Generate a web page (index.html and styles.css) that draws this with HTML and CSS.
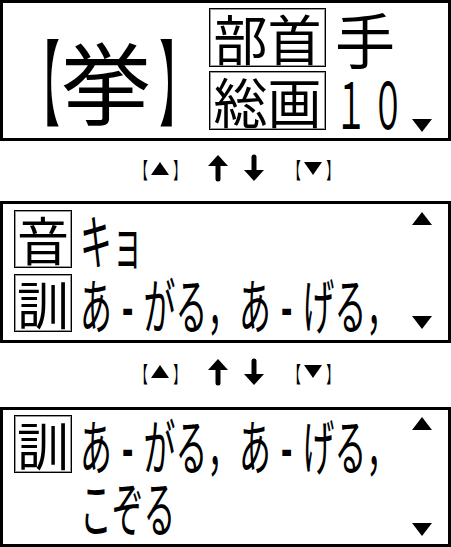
FILE: index.html
```html
<!DOCTYPE html>
<html lang="ja">
<head>
    <meta charset="UTF-8">
    <title>漢字辞典</title>
    <link rel="stylesheet" href="styles.css">
</head>
<body>
    <div class="screen">
        <section class="panel panel-head">
            <div class="headword">
                <span class="br"><span class="br-glyph">【</span></span>
                <span class="kanji">挙</span>
                <span class="br br-close"><span class="br-glyph">】</span></span>
            </div>
            <div class="info">
                <div class="tag tag-wide">部首</div>
                <div class="value">手</div>
                <div class="tag tag-wide">総画</div>
                <div class="value"><span class="narrow digits">１０</span></div>
            </div>
            <div class="scroll scroll-end">
                <svg class="tri" viewBox="0 0 20 13"><polygon points="0,0 20,0 10,13"/></svg>
            </div>
        </section>

        <div class="nav">
            <span class="key"><span class="kbr"><span>【</span></span><svg class="key-tri" viewBox="0 0 18 13"><polygon points="0,13 18,13 9,0"/></svg><span class="kbr"><span>】</span></span></span>
            <svg class="arrow up" viewBox="0 0 20 28"><path d="M10 25 V9"/><polygon points="0,12 10,1 20,12 15,12 5,12"/></svg>
            <svg class="arrow down" viewBox="0 0 20 28"><path d="M10 3 V19"/><polygon points="0,16 10,27 20,16 15,16 5,16"/></svg>
            <span class="key key-r"><span class="kbr"><span>【</span></span><svg class="key-tri" viewBox="0 0 18 13"><polygon points="0,0 18,0 9,13"/></svg><span class="kbr"><span>】</span></span></span>
        </div>

        <section class="panel panel-body">
            <div class="rows">
                <div class="row">
                    <div class="tag">音</div>
                    <div class="reading"><span class="narrow">キョ</span></div>
                </div>
                <div class="row">
                    <div class="tag">訓</div>
                    <div class="reading"><span class="narrow">あ<span class="hy">-</span>がる，あ<span class="hy">-</span>げる，</span></div>
                </div>
            </div>
            <div class="scroll">
                <svg class="tri" viewBox="0 0 20 13"><polygon points="0,13 20,13 10,0"/></svg>
                <svg class="tri" viewBox="0 0 20 13"><polygon points="0,0 20,0 10,13"/></svg>
            </div>
        </section>

        <div class="nav nav-2">
            <span class="key"><span class="kbr"><span>【</span></span><svg class="key-tri" viewBox="0 0 18 13"><polygon points="0,13 18,13 9,0"/></svg><span class="kbr"><span>】</span></span></span>
            <svg class="arrow up" viewBox="0 0 20 28"><path d="M10 25 V9"/><polygon points="0,12 10,1 20,12 15,12 5,12"/></svg>
            <svg class="arrow down" viewBox="0 0 20 28"><path d="M10 3 V19"/><polygon points="0,16 10,27 20,16 15,16 5,16"/></svg>
            <span class="key key-r"><span class="kbr"><span>【</span></span><svg class="key-tri" viewBox="0 0 18 13"><polygon points="0,0 18,0 9,13"/></svg><span class="kbr"><span>】</span></span></span>
        </div>

        <section class="panel panel-last">
            <div class="rows">
                <div class="row">
                    <div class="tag">訓</div>
                    <div class="reading"><span class="narrow">あ<span class="hy">-</span>がる，あ<span class="hy">-</span>げる，</span></div>
                </div>
                <div class="row">
                    <div class="tag tag-blank"></div>
                    <div class="reading"><span class="narrow">こぞる</span></div>
                </div>
            </div>
            <div class="scroll">
                <svg class="tri" viewBox="0 0 20 13"><polygon points="0,13 20,13 10,0"/></svg>
                <svg class="tri" viewBox="0 0 20 13"><polygon points="0,0 20,0 10,13"/></svg>
            </div>
        </section>
    </div>
</body>
</html>
```

FILE: styles.css
```css
* {
    box-sizing: border-box;
}
body {
    margin: 0;
    background-color: #fff;
    color: #000;
    font-family: "Noto Sans CJK JP", sans-serif;
}
.screen {
    width: 451px;
    display: flex;
    flex-direction: column;
}
.panel {
    border: 3px solid #000;
    display: flex;
}
.panel-head {
    height: 141px;
    padding-left: 36px;
}
.panel-body {
    height: 142px;
    padding: 6px 0 6px 11px;
}
.panel-last {
    height: 140px;
    padding: 5px 0 3px 11px;
}

/* headword */
.headword {
    display: flex;
    align-items: center;
    font-size: 90px;
    line-height: 1;
    padding-top: 17px;
    flex: none;
}
.br {
    width: 20px;
    display: flex;
    justify-content: center;
}
.br-close {
    margin-left: 8px;
}
.br-glyph {
    display: block;
    font-size: 94px;
    font-feature-settings: "palt";
    transform: scaleX(.4);
    height: 96px;
}
.kanji {
    width: 90px;
    margin-left: 2px;
}

.info {
    display: grid;
    grid-template-columns: 117px 66px;
    grid-auto-rows: 59px;
    row-gap: 4px;
    column-gap: 9px;
    margin-top: 5px;
    margin-left: 30px;
    flex: none;
}
.tag {
    width: 58px;
    height: 58px;
    border: 1px solid #000;
    box-shadow: inset 0 0 0 1px #999;
    display: flex;
    align-items: center;
    justify-content: center;
    font-size: 52px;
    line-height: 1;
    flex: none;
}
.tag-wide {
    width: 117px;
    height: 59px;
    font-size: 54px;
}
.tag-blank {
    visibility: hidden;
}
.value {
    display: flex;
    align-items: center;
    font-size: 60px;
    line-height: 1;
    min-width: 0;
}

/* condensed kana and digits */
.narrow {
    display: inline-block;
    white-space: nowrap;
    transform: scaleX(.53);
    transform-origin: left center;
    font-size: 60px;
    line-height: 1;
}
.digits {
    font-size: 64px;
    letter-spacing: 10px;
    transform: scaleX(.5);
}
.hy {
    display: inline-block;
    width: 1em;
    text-align: center;
    font-weight: bold;
}

.scroll {
    margin-left: auto;
    width: 20px;
    margin-right: 16px;
    display: flex;
    flex-direction: column;
    justify-content: space-between;
    padding: 2px 0 5px;
    flex: none;
}
.scroll-end {
    justify-content: flex-end;
    padding-bottom: 6px;
}
.tri {
    width: 20px;
    height: 13px;
    display: block;
}

.rows {
    display: flex;
    flex-direction: column;
    gap: 6px;
    flex: 1;
    min-width: 0;
}
.panel-last .rows {
    gap: 4px;
}
.row {
    display: flex;
    align-items: center;
    height: 58px;
    gap: 8px;
}
.reading {
    flex: 1;
    min-width: 0;
}

/* key hints between panels */
.nav {
    height: 60px;
    display: flex;
    align-items: center;
    padding-left: 140px;
    padding-bottom: 6px;
}
.nav-2 {
    height: 64px;
    padding-bottom: 7px;
}
.key {
    display: flex;
    align-items: center;
    gap: 3px;
}
.key-r {
    margin-left: 29px;
}
.kbr {
    width: 8px;
    display: flex;
    justify-content: center;
    font-size: 22px;
    line-height: 1;
}
.kbr span {
    display: block;
    font-feature-settings: "palt";
    transform: scaleX(.55);
}
.key-tri {
    width: 18px;
    height: 13px;
    display: block;
}
.arrow {
    width: 20px;
    height: 28px;
    display: block;
}
.arrow path {
    stroke: #000;
    stroke-width: 5;
    stroke-linecap: round;
    fill: none;
}
.arrow.up {
    margin-left: 28px;
}
.arrow.down {
    margin-left: 16px;
}
```
